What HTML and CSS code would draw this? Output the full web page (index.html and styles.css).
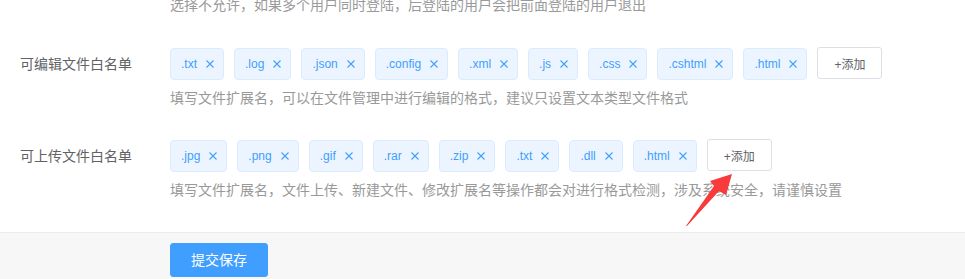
FILE: index.html
```html
<!DOCTYPE html>
<html lang="zh-CN">
<head>
  <meta charset="UTF-8">
  <meta name="viewport" content="width=device-width, initial-scale=1.0">
  <title>文件白名单设置</title>
  <link rel="stylesheet" href="styles.css">
</head>
<body>
  <div class="page">
    <div class="form">
      <div class="form-help intro-help">选择不允许，如果多个用户同时登陆，后登陆的用户会把前面登陆的用户退出</div>

      <div class="form-item">
        <label class="form-label">可编辑文件白名单</label>
        <div class="form-content">
          <div class="tag-row">
            <span class="tag">.txt<span class="tag-close"><svg viewBox="0 0 8 8"><path d="M0.5 0.5L7.5 7.5M7.5 0.5L0.5 7.5"/></svg></span></span>
            <span class="tag">.log<span class="tag-close"><svg viewBox="0 0 8 8"><path d="M0.5 0.5L7.5 7.5M7.5 0.5L0.5 7.5"/></svg></span></span>
            <span class="tag">.json<span class="tag-close"><svg viewBox="0 0 8 8"><path d="M0.5 0.5L7.5 7.5M7.5 0.5L0.5 7.5"/></svg></span></span>
            <span class="tag">.config<span class="tag-close"><svg viewBox="0 0 8 8"><path d="M0.5 0.5L7.5 7.5M7.5 0.5L0.5 7.5"/></svg></span></span>
            <span class="tag">.xml<span class="tag-close"><svg viewBox="0 0 8 8"><path d="M0.5 0.5L7.5 7.5M7.5 0.5L0.5 7.5"/></svg></span></span>
            <span class="tag">.js<span class="tag-close"><svg viewBox="0 0 8 8"><path d="M0.5 0.5L7.5 7.5M7.5 0.5L0.5 7.5"/></svg></span></span>
            <span class="tag">.css<span class="tag-close"><svg viewBox="0 0 8 8"><path d="M0.5 0.5L7.5 7.5M7.5 0.5L0.5 7.5"/></svg></span></span>
            <span class="tag">.cshtml<span class="tag-close"><svg viewBox="0 0 8 8"><path d="M0.5 0.5L7.5 7.5M7.5 0.5L0.5 7.5"/></svg></span></span>
            <span class="tag">.html<span class="tag-close"><svg viewBox="0 0 8 8"><path d="M0.5 0.5L7.5 7.5M7.5 0.5L0.5 7.5"/></svg></span></span>
            <button class="btn-new-tag">+添加</button>
          </div>
          <div class="form-help">填写文件扩展名，可以在文件管理中进行编辑的格式，建议只设置文本类型文件格式</div>
        </div>
      </div>

      <div class="form-item">
        <label class="form-label">可上传文件白名单</label>
        <div class="form-content">
          <div class="tag-row">
            <span class="tag">.jpg<span class="tag-close"><svg viewBox="0 0 8 8"><path d="M0.5 0.5L7.5 7.5M7.5 0.5L0.5 7.5"/></svg></span></span>
            <span class="tag">.png<span class="tag-close"><svg viewBox="0 0 8 8"><path d="M0.5 0.5L7.5 7.5M7.5 0.5L0.5 7.5"/></svg></span></span>
            <span class="tag">.gif<span class="tag-close"><svg viewBox="0 0 8 8"><path d="M0.5 0.5L7.5 7.5M7.5 0.5L0.5 7.5"/></svg></span></span>
            <span class="tag">.rar<span class="tag-close"><svg viewBox="0 0 8 8"><path d="M0.5 0.5L7.5 7.5M7.5 0.5L0.5 7.5"/></svg></span></span>
            <span class="tag">.zip<span class="tag-close"><svg viewBox="0 0 8 8"><path d="M0.5 0.5L7.5 7.5M7.5 0.5L0.5 7.5"/></svg></span></span>
            <span class="tag">.txt<span class="tag-close"><svg viewBox="0 0 8 8"><path d="M0.5 0.5L7.5 7.5M7.5 0.5L0.5 7.5"/></svg></span></span>
            <span class="tag">.dll<span class="tag-close"><svg viewBox="0 0 8 8"><path d="M0.5 0.5L7.5 7.5M7.5 0.5L0.5 7.5"/></svg></span></span>
            <span class="tag">.html<span class="tag-close"><svg viewBox="0 0 8 8"><path d="M0.5 0.5L7.5 7.5M7.5 0.5L0.5 7.5"/></svg></span></span>
            <button class="btn-new-tag">+添加</button>
          </div>
          <div class="form-help">填写文件扩展名，文件上传、新建文件、修改扩展名等操作都会对进行格式检测，涉及系统安全，请谨慎设置</div>
        </div>
      </div>
    </div>

    <div class="footer">
      <button class="btn-primary">提交保存</button>
    </div>

    <svg class="annot-arrow" viewBox="0 0 60 60" width="60" height="60">
      <polygon points="6,56 34,16 30,11 52,4 46,25 39,21 7,56"/>
    </svg>
  </div>
</body>
</html>
```

FILE: styles.css
```css
html, body {
  margin: 0;
  padding: 0;
  height: 100%;
  background-color: #fff;
  font-family: 'Liberation Sans', 'Noto Sans CJK SC', sans-serif;
  overflow: hidden;
}
.page {
  position: relative;
  height: 100%;
  display: flex;
  flex-direction: column;
}
.form {
  background: #fff;
}
.form-help {
  font-size: 14px;
  line-height: 20px;
  color: #999;
  margin-top: 8px;
}
.intro-help {
  margin-top: -5px;
  margin-bottom: 32px;
  padding-left: 170px;
}
.form-item {
  display: flex;
  align-items: flex-start;
  margin-bottom: 31px;
}
.form-item:last-child {
  margin-bottom: 32px;
}
.form-label {
  width: 150px;
  padding-left: 20px;
  font-size: 14px;
  line-height: 34px;
  color: #606266;
  flex-shrink: 0;
}
.form-content {
  flex: 1;
}
.tag-row {
  display: flex;
  align-items: flex-start;
  gap: 10px;
}
.tag {
  display: inline-flex;
  align-items: center;
  height: 32px;
  margin-top: 1px;
  padding: 0 5px 0 10px;
  box-sizing: border-box;
  font-size: 12px;
  color: #409eff;
  background-color: #ecf5ff;
  border: 1px solid #d9ecff;
  border-radius: 4px;
  white-space: nowrap;
}
.tag-close {
  display: inline-flex;
  align-items: center;
  justify-content: center;
  width: 16px;
  height: 16px;
  margin-left: 5px;
  cursor: pointer;
}
.tag-close svg {
  width: 8px;
  height: 8px;
  stroke: #409eff;
  stroke-width: 1.1;
  fill: none;
}
.btn-new-tag {
  height: 32px;
  padding: 0 16px;
  font-family: inherit;
  font-size: 12px;
  color: #606266;
  background: #fff;
  border: 1px solid #dcdfe6;
  border-radius: 3px;
  cursor: pointer;
}
.footer {
  flex: 1;
  background-color: #f7f7f7;
  border-top: 1px solid #ebebeb;
  padding: 10px 0 0 170px;
}
.btn-primary {
  padding: 9px 20px;
  font-family: inherit;
  font-size: 14px;
  line-height: 14px;
  color: #fff;
  background-color: #409eff;
  border: 1px solid #409eff;
  border-radius: 3px;
  cursor: pointer;
}
.annot-arrow {
  position: absolute;
  left: 680px;
  top: 170px;
  fill: #f83a3a;
}
```
